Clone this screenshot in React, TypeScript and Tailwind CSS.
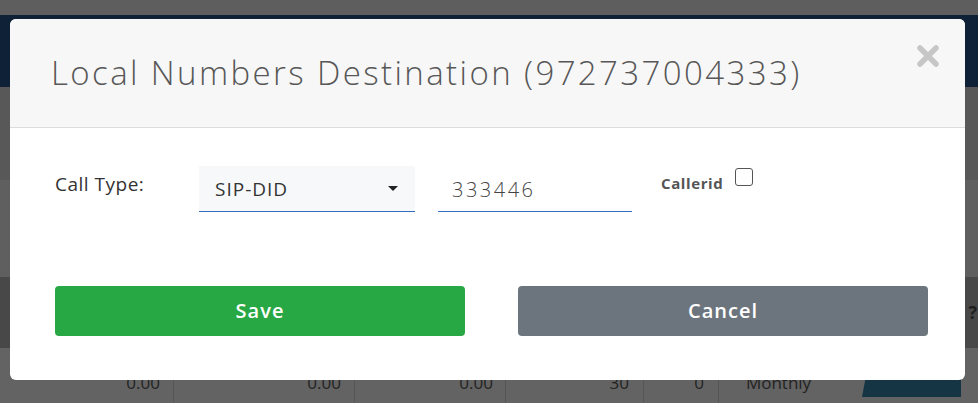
import React from "react";

const font = { fontFamily: '"Open Sans", "Liberation Sans", sans-serif' };

function Backdrop() {
  return (
    <div className="flex flex-col w-full h-full">
      <div className="h-[15px] bg-[#5e5e5e]" />
      <div className="h-[72px] bg-[#0f2136]" />
      <div className="h-[93px] bg-[#585858]" />
      <div className="h-[97px] bg-[#5f5f5f]" />
      <div className="h-[71px] bg-[#484848] flex justify-end items-center pr-[1px]">
        <span className="text-[#1f1f1f] font-bold text-[18px]">?</span>
      </div>
      <div className="flex-1 bg-[#636363] flex text-[#222] text-[17px] leading-none pt-[26px]">
        <div className="w-[174px] border-r border-[#555] text-right pr-[13px]">0.00</div>
        <div className="w-[181px] border-r border-[#555] text-right pr-[13px]">0.00</div>
        <div className="w-[151px] border-r border-[#555] text-right pr-[12px]">0.00</div>
        <div className="w-[138px] border-r border-[#555] text-right pr-[14px]">30</div>
        <div className="w-[75px] border-r border-[#555] text-right pr-[14px]">0</div>
        <div className="w-[121px] text-center pr-[2px]">Monthly</div>
        <div className="pl-[22px]">
          <div className="w-[99px] h-[42px] -mt-[19px] bg-[#163544] [clip-path:polygon(8%_0,100%_0,100%_100%,0_100%)]" />
        </div>
      </div>
    </div>
  );
}

function Modal() {
  return (
    <div className="absolute left-[10px] top-[19px] w-[955px] h-[361px] bg-white rounded-[6px] overflow-hidden flex flex-col">
      <div className="h-[109px] shrink-0 bg-[#f7f7f7] border-b border-[#dcdcdc] flex items-center justify-between pl-[41px] pr-[25px]">
        <h4 className="text-[33px] font-light text-[#575757] tracking-[2.4px] leading-none pb-[1px]">
          Local Numbers Destination (972737004333)
        </h4>
        <svg width="24" height="24" viewBox="0 0 24 24" className="-mt-[34px]">
          <path d="M4 4 L20 20 M20 4 L4 20" stroke="#c6c6c6" strokeWidth="5.5" strokeLinecap="round" />
        </svg>
      </div>
      <div className="flex-1 pl-[45px] pr-[37px] pt-[38px]">
        <div className="flex items-start">
          <label className="w-[144px] text-[19px] tracking-[0.5px] text-[#333] pt-[5px] leading-[26px]">Call Type:</label>
          <div className="w-[216px] h-[46px] bg-[#f7f8fa] border-b border-[#2f6fbe] flex items-center justify-between pl-[16px] pr-[17px]">
            <span className="text-[19px] tracking-[1px] text-[#333] pt-[2px]">SIP-DID</span>
            <svg width="10" height="6" viewBox="0 0 10 6">
              <path d="M0 0 H10 L5 5 Z" fill="#222" />
            </svg>
          </div>
          <div className="ml-[23px] w-[194px] h-[46px] border-b border-[#2f6fbe] flex items-center pl-[14px] pt-[2px]">
            <span className="text-[20px] tracking-[2.5px] text-[#444] font-light">333446</span>
          </div>
          <div className="ml-[29px] flex items-start gap-[12px]">
            <span className="text-[15px] tracking-[0.6px] font-bold text-[#555] pt-[7px] leading-[20px]">Callerid</span>
            <span className="mt-[2px] w-[18px] h-[18px] border-[1.5px] border-[#555] rounded-[3px] bg-white" />
          </div>
        </div>
        <div className="flex gap-[53px] mt-[74px]">
          <button className="w-[410px] h-[50px] bg-[#28a745] rounded-[4px] text-white text-[20px] tracking-[1px] font-semibold">Save</button>
          <button className="w-[410px] h-[50px] bg-[#6c757d] rounded-[4px] text-white text-[20px] tracking-[1px] font-semibold">Cancel</button>
        </div>
      </div>
    </div>
  );
}

export default function App() {
  return (
    <div className="relative w-[978px] h-[403px] overflow-hidden" style={font}>
      <Backdrop />
      <Modal />
    </div>
  );
}
